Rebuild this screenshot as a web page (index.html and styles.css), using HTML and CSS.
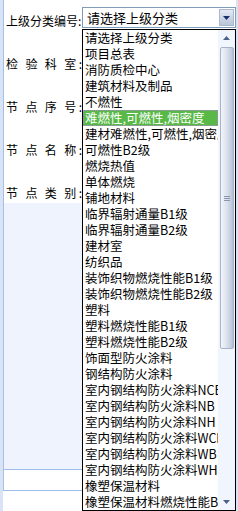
FILE: index.html
```html
<!DOCTYPE html>
<html>
<head>
    <meta charset="UTF-8">
    <title>节点编辑</title>
    <link rel="stylesheet" href="styles.css">
</head>
<body>
<div class="page">
    <div class="form">
        <div class="row row-top">
            <span class="lbl">上级分类编号:</span>
            <div class="combo">
                <span class="combo-text">请选择上级分类</span>
                <span class="combo-btn">
                    <svg width="7" height="4" viewBox="0 0 7 4"><path d="M0 0h7L3.5 4z" fill="#1c2f6b"/></svg>
                </span>
            </div>
        </div>
        <div class="row"><span class="lbl">检 验 科 室:</span></div>
        <div class="row"><span class="lbl">节 点 序 号:</span></div>
        <div class="row"><span class="lbl">节 点 名 称:</span></div>
        <div class="row"><span class="lbl">节 点 类 别:</span></div>
        <div class="memo"></div>
        <div class="foot"></div>
    </div>

    <div class="dropdown">
        <ul class="opts">
            <li>请选择上级分类</li>
            <li>项目总表</li>
            <li>消防质检中心</li>
            <li>建筑材料及制品</li>
            <li>不燃性</li>
            <li class="sel">难燃性,可燃性,烟密度</li>
            <li>建材难燃性,可燃性,烟密度</li>
            <li>可燃性B2级</li>
            <li>燃烧热值</li>
            <li>单体燃烧</li>
            <li>铺地材料</li>
            <li>临界辐射通量B1级</li>
            <li>临界辐射通量B2级</li>
            <li>建材室</li>
            <li>纺织品</li>
            <li>装饰织物燃烧性能B1级</li>
            <li>装饰织物燃烧性能B2级</li>
            <li>塑料</li>
            <li>塑料燃烧性能B1级</li>
            <li>塑料燃烧性能B2级</li>
            <li>饰面型防火涂料</li>
            <li>钢结构防火涂料</li>
            <li>室内钢结构防火涂料NCB</li>
            <li>室内钢结构防火涂料NB</li>
            <li>室内钢结构防火涂料NH</li>
            <li>室内钢结构防火涂料WCB</li>
            <li>室内钢结构防火涂料WB</li>
            <li>室内钢结构防火涂料WH</li>
            <li>橡塑保温材料</li>
            <li>橡塑保温材料燃烧性能B1级</li>
        </ul>
        <div class="sbar">
            <div class="sb-arrow">
                <svg width="7" height="4" viewBox="0 0 7 4"><path d="M3.5 0L7 4H0z" fill="#4d6185"/></svg>
            </div>
            <div class="sb-thumb">
                <svg width="6" height="5" viewBox="0 0 6 5"><path d="M0 .5h6M0 2.5h6M0 4.5h6" stroke="#8a96ac" stroke-width="1"/></svg>
            </div>
            <div class="sb-track"></div>
            <div class="sb-arrow">
                <svg width="7" height="4" viewBox="0 0 7 4"><path d="M0 0h7L3.5 4z" fill="#4d6185"/></svg>
            </div>
        </div>
    </div>
</div>
</body>
</html>
```

FILE: styles.css
```css
body {
    margin: 0;
    background: #fff;
    font-family: "Noto Sans CJK SC", "Noto Sans", sans-serif;
    color: #000;
}
.page {
    position: relative;
    width: 238px;
    height: 511px;
    box-sizing: border-box;
    border-left: 3px solid #d8e4f5;
    border-right: 2px solid #d8e4f5;
    overflow: hidden;
}
.form {
    border-left: 1px solid #a3c0e9;
    padding-top: 7px;
}
.row {
    display: flex;
    align-items: center;
    height: 20px;
    margin-bottom: 23px;
}
.row-top {
    align-items: flex-start;
    height: 21px;
    margin-bottom: 26px;
}
.row:nth-child(5) {
    margin-bottom: 0;
}
.lbl {
    width: 76px;
    margin-left: 2px;
    font-size: 12px;
    line-height: 16px;
    white-space: nowrap;
    text-align: justify;
    text-align-last: justify;
}
.row-top .lbl {
    padding-top: 6px;
    text-align-last: left;
}
.combo {
    display: flex;
    align-items: center;
    width: 154px;
    height: 21px;
    box-sizing: border-box;
    border: 1px solid #7f9db9;
    background: #fff;
}
.combo-text {
    flex: 1;
    padding-left: 4px;
    font-size: 13px;
    line-height: 16px;
    white-space: nowrap;
}
.combo-btn {
    display: flex;
    align-items: center;
    justify-content: center;
    width: 15px;
    height: 17px;
    margin-right: 1px;
    box-sizing: border-box;
    border: 1px solid #a9b7cf;
    background: linear-gradient(#e4eaf4, #b9c5d9);
}
.memo {
    height: 266px;
    background: #eef3fd;
}
.foot {
    height: 20px;
    border-top: 1px solid #9ebde8;
    border-bottom: 1px solid #9ebde8;
    background: #fff;
}
.dropdown {
    position: absolute;
    left: 79px;
    top: 29px;
    width: 154px;
    height: 482px;
    box-sizing: border-box;
    border: 1px solid #000;
    background: #fff;
    display: flex;
}
.opts {
    list-style: none;
    margin: 0;
    padding: 0;
    width: 135px;
}
.opts li {
    height: 16px;
    line-height: 16px;
    padding-left: 2px;
    font-size: 12.5px;
    white-space: nowrap;
    overflow: hidden;
}
.opts .sel {
    background: #58b947;
    color: #fff;
    outline: 1px dotted #b583d8;
    outline-offset: -1px;
}
.sbar {
    width: 17px;
    display: flex;
    flex-direction: column;
    background: #f1f5fd;
}
.sb-arrow {
    height: 16px;
    display: flex;
    align-items: center;
    justify-content: center;
}
.sb-thumb {
    height: 302px;
    margin: 1px 1px 0 2px;
    box-sizing: border-box;
    border: 1px solid #a7b3c8;
    border-radius: 2px;
    background: linear-gradient(90deg, #f2f5fb, #dde3ee 45%, #c3ccdc 85%, #b0bbce);
    display: flex;
    align-items: center;
    justify-content: center;
}
.sb-track {
    flex: 1;
}
```
